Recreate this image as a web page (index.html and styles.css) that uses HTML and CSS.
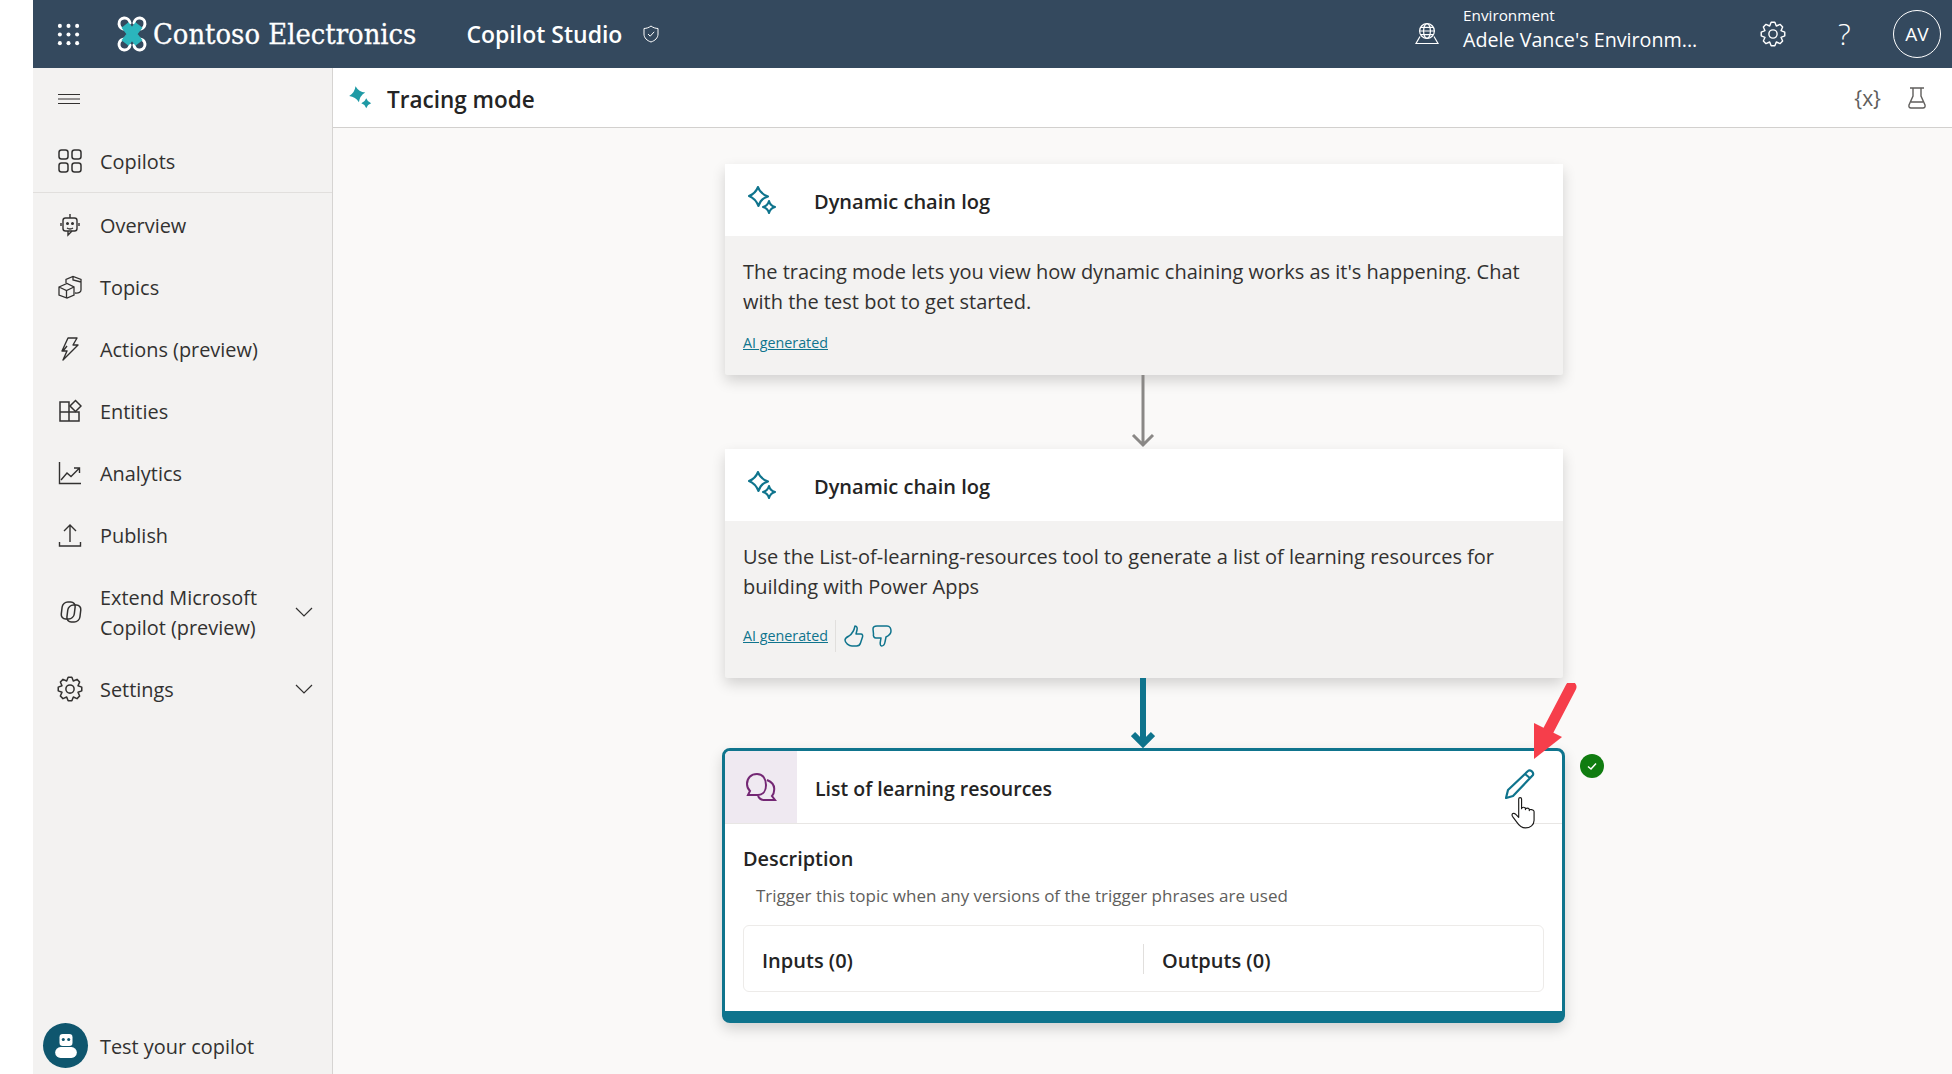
FILE: index.html

```html
<!DOCTYPE html>
<html lang="en">
<head>
    <meta charset="UTF-8">
    <title>Copilot Studio - Tracing mode</title>
    <link rel="stylesheet" href="styles.css">
</head>
<body>
<div class="app">
    <header class="topbar">
        <svg class="waffle" viewBox="0 0 24 24" fill="#fff">
            <circle cx="3" cy="3" r="2.1"/><circle cx="12" cy="3" r="2.1"/><circle cx="21" cy="3" r="2.1"/>
            <circle cx="3" cy="12" r="2.1"/><circle cx="12" cy="12" r="2.1"/><circle cx="21" cy="12" r="2.1"/>
            <circle cx="3" cy="21" r="2.1"/><circle cx="12" cy="21" r="2.1"/><circle cx="21" cy="21" r="2.1"/>
        </svg>
        <svg class="logo" viewBox="0 0 30 36">
            <path d="M8 13 A5.5 5.5 0 1 1 13 7 M22 13 A5.5 5.5 0 1 0 17 7 M8 23 A5.5 5.5 0 1 0 13 29 M22 23 A5.5 5.5 0 1 1 17 29" fill="none" stroke="#fff" stroke-width="3" stroke-linecap="round"/>
            <path d="M8 9 L22 27 M22 9 L8 27" fill="none" stroke="#2bb5bd" stroke-width="9"/>
        </svg>
        <span class="brand">Contoso Electronics</span>
        <span class="product">Copilot Studio</span>
        <svg class="shield" viewBox="0 0 18 18" fill="none" stroke="#fff" stroke-width="1">
            <path d="M9 1 C11 2.6 13.5 3.4 16 3.5 V9 C16 13 13 15.6 9 17 C5 15.6 2 13 2 9 V3.5 C4.5 3.4 7 2.6 9 1Z"/>
            <path d="M6 9 L8.2 11.2 L12.2 6.8"/>
        </svg>
        <div class="topbar-right">
            <svg class="globe" viewBox="0 0 24 22" fill="none" stroke="#fff" stroke-width="1.2">
                <circle cx="12" cy="8" r="7.4"/><ellipse cx="12" cy="8" rx="3.4" ry="7.4"/>
                <path d="M4.6 8 H19.4 M5.6 4.4 H18.4 M5.6 11.6 H18.4"/>
                <path d="M5 13.5 L1 20.5 H23 L19 13.5"/>
            </svg>
            <div class="env">
                <div class="env-label">Environment</div>
                <div class="env-name">Adele Vance's Environm...</div>
            </div>
            <svg class="gear-top" viewBox="0 0 24 24" fill="none" stroke="#fff" stroke-width="1.3" stroke-linejoin="round">
                <path d="M22.86 10.28 L22.86 13.72 L19.39 15.06 L20.9 18.47 L18.47 20.9 L15.06 19.39 L13.72 22.86 L10.28 22.86 L8.94 19.39 L5.53 20.9 L3.1 18.47 L4.61 15.06 L1.14 13.72 L1.14 10.28 L4.61 8.94 L3.1 5.53 L5.53 3.1 L8.94 4.61 L10.28 1.14 L13.72 1.14 L15.06 4.61 L18.47 3.1 L20.9 5.53 L19.39 8.94Z"/>
                <circle cx="12" cy="12" r="3.8"/>
            </svg>
            <span class="help">?</span>
            <div class="avatar">AV</div>
        </div>
    </header>

    <div class="workspace">
        <nav class="sidebar">
            <div class="nav-menu">
                <svg class="menu-icon" viewBox="0 0 22 10" stroke="#323130" stroke-width="1"><path d="M0 .5 H22 M0 5 H22 M0 9.5 H22"/></svg>
            </div>
            <a class="nav-row nav-first">
                <svg class="nav-icon" viewBox="0 0 24 24" fill="none" stroke="#323130" stroke-width="1.5">
                    <rect x="1" y="1" width="9" height="9" rx="2.5"/><rect x="14" y="1" width="9" height="9" rx="2.5"/>
                    <rect x="1" y="14" width="9" height="9" rx="2.5"/><rect x="14" y="14" width="9" height="9" rx="2.5"/>
                </svg>
                <span class="nav-label">Copilots</span>
            </a>
            <a class="nav-row">
                <svg class="nav-icon" viewBox="0 0 24 24" fill="none" stroke="#323130" stroke-width="1.4">
                    <path d="M12 1 V5"/><rect x="5" y="5" width="14" height="13" rx="2.5"/>
                    <path d="M3 10 V13 M21 10 V13 M9 15 Q12 17 15 15 M10 18 V22 L14 18"/>
                    <circle cx="9.5" cy="10.5" r=".8" fill="#323130"/><circle cx="14.5" cy="10.5" r=".8" fill="#323130"/>
                </svg>
                <span class="nav-label">Overview</span>
            </a>
            <a class="nav-row">
                <svg class="nav-icon" viewBox="0 0 24 24" fill="none" stroke="#323130" stroke-width="1.3">
                    <path d="M1 12 L9 8.5 L16 12 V20 L9 23 L1 20Z M1 12 L8.5 15.5 L16 12 M8.5 15.5 V23"/>
                    <path d="M8 8 V4.5 L15 1.5 L23 4.5 V15 C23 17 21 18.5 17 18 M15 1.5 V5 L23 7"/>
                </svg>
                <span class="nav-label">Topics</span>
            </a>
            <a class="nav-row">
                <svg class="nav-icon" viewBox="0 0 24 24" fill="none" stroke="#323130" stroke-width="1.4" stroke-linejoin="round">
                    <path d="M10 1 H19 L15 8 H20 L5 23 L9 14 H4 Z M5 14 L9 9"/>
                </svg>
                <span class="nav-label">Actions (preview)</span>
            </a>
            <a class="nav-row">
                <svg class="nav-icon" viewBox="0 0 24 24" fill="none" stroke="#323130" stroke-width="1.5">
                    <path d="M2 3 H11 V22 H2Z M2 13 H21 V22 H11"/>
                    <path d="M17.5 1.5 L23 7 L17.5 12.5 L12 7Z"/>
                </svg>
                <span class="nav-label">Entities</span>
            </a>
            <a class="nav-row">
                <svg class="nav-icon" viewBox="0 0 24 24" fill="none" stroke="#323130" stroke-width="1.4">
                    <path d="M1.5 1 V22.5 H23"/>
                    <path d="M3 19 L9 12 L13 15.5 L21 7.5 M16 7 H21.5 V12"/>
                </svg>
                <span class="nav-label">Analytics</span>
            </a>
            <a class="nav-row">
                <svg class="nav-icon" viewBox="0 0 24 24" fill="none" stroke="#323130" stroke-width="1.4">
                    <path d="M12 19 V2 M6 8 L12 2 L18 8 M1.5 19 V23 H22.5 V19"/>
                </svg>
                <span class="nav-label">Publish</span>
            </a>
            <a class="nav-row nav-tall">
                <svg class="nav-icon" viewBox="0 0 24 24" fill="none" stroke="#323130" stroke-width="1.5">
                    <rect x="3" y="2" width="13" height="17" rx="5" transform="skewX(-7) translate(2 0)"/>
                    <rect x="8" y="5" width="13" height="17" rx="5" transform="skewX(-7) translate(3 0)"/>
                </svg>
                <span class="nav-label">Extend Microsoft<br>Copilot (preview)</span>
                <svg class="chevron" viewBox="0 0 18 10" fill="none" stroke="#323130" stroke-width="1.2"><path d="M1 1 L9 9 L17 1"/></svg>
            </a>
            <a class="nav-row">
                <svg class="nav-icon nav-gear" viewBox="0 0 24 24" fill="none" stroke="#323130" stroke-width="1.4" stroke-linejoin="round">
                    <path d="M22.86 10.28 L22.86 13.72 L19.39 15.06 L20.9 18.47 L18.47 20.9 L15.06 19.39 L13.72 22.86 L10.28 22.86 L8.94 19.39 L5.53 20.9 L3.1 18.47 L4.61 15.06 L1.14 13.72 L1.14 10.28 L4.61 8.94 L3.1 5.53 L5.53 3.1 L8.94 4.61 L10.28 1.14 L13.72 1.14 L15.06 4.61 L18.47 3.1 L20.9 5.53 L19.39 8.94Z"/>
                    <circle cx="12" cy="12" r="3.8"/>
                </svg>
                <span class="nav-label">Settings</span>
                <svg class="chevron" viewBox="0 0 18 10" fill="none" stroke="#323130" stroke-width="1.2"><path d="M1 1 L9 9 L17 1"/></svg>
            </a>
            <a class="test-row">
                <span class="test-circle">
                    <svg viewBox="0 0 24 24" fill="#fff">
                        <rect x="6" y="1" width="12" height="11" rx="3"/>
                        <rect x="2" y="13" width="20" height="10" rx="5"/>
                        <circle cx="9.5" cy="6" r="1.4" fill="#0f566e"/><circle cx="14.5" cy="6" r="1.4" fill="#0f566e"/>
                    </svg>
                </span>
                <span class="nav-label">Test your copilot</span>
            </a>
        </nav>

        <main class="main">
            <div class="titlebar">
                <svg class="title-spark" viewBox="0 0 28 28" fill="#1f9aa5">
                    <path d="M10 0 Q12.5 7.5 20 10 Q12.5 12.5 10 20 Q7.5 12.5 0 10 Q7.5 7.5 10 0Z" transform="rotate(-12 10 10)"/>
                    <path d="M21 15 Q22.5 19.5 27 21 Q22.5 22.5 21 27 Q19.5 22.5 15 21 Q19.5 19.5 21 15Z"/>
                </svg>
                <h1>Tracing mode</h1>
                <span class="var-icon">{x}</span>
                <svg class="flask" viewBox="0 0 20 22" fill="none" stroke="#605e5c" stroke-width="1.4">
                    <path d="M3 1 H17 M6 1 V9 L2 18 C1.5 20 2.5 21 4 21 H16 C17.5 21 18.5 20 18 18 L14 9 V1 M4 15 H16"/>
                </svg>
            </div>

            <div class="canvas">
                <section class="card">
                    <div class="card-head">
                        <svg class="spark-outline" viewBox="0 0 28 28" fill="none" stroke="#0f748d" stroke-width="2.1" stroke-linejoin="round">
                            <path d="M10 1 Q12 7.5 20 10.5 Q12.5 12.5 10.5 20 Q7.5 12.5 1 10 Q7.5 7.5 10 1Z"/>
                            <path d="M21 15 Q22 19.5 27 21 Q22.5 22 21 27 Q20 22.5 15 21 Q19.5 20 21 15Z"/>
                        </svg>
                        <h2>Dynamic chain log</h2>
                    </div>
                    <div class="card-body">
                        <p>The tracing mode lets you view how dynamic chaining works as it's happening. Chat with the test bot to get started.</p>
                        <div class="ai-row"><a class="ai-link">AI generated</a></div>
                    </div>
                </section>

                <svg class="link-arrow" viewBox="0 0 24 74" fill="none" stroke="#8a8886" stroke-width="3">
                    <path d="M12 0 V70 M2 60 L12 70 L22 60"/>
                </svg>

                <section class="card">
                    <div class="card-head">
                        <svg class="spark-outline" viewBox="0 0 28 28" fill="none" stroke="#0f748d" stroke-width="2.1" stroke-linejoin="round">
                            <path d="M10 1 Q12 7.5 20 10.5 Q12.5 12.5 10.5 20 Q7.5 12.5 1 10 Q7.5 7.5 10 1Z"/>
                            <path d="M21 15 Q22 19.5 27 21 Q22.5 22 21 27 Q20 22.5 15 21 Q19.5 20 21 15Z"/>
                        </svg>
                        <h2>Dynamic chain log</h2>
                    </div>
                    <div class="card-body card-body-rated">
                        <p>Use the List-of-learning-resources tool to generate a list of learning resources for building with Power Apps</p>
                        <div class="ai-row">
                            <a class="ai-link">AI generated</a>
                            <span class="ai-sep"></span>
                            <svg class="thumb" viewBox="0 0 20 22" fill="none" stroke="#0f748d" stroke-width="1.5" stroke-linejoin="round">
                                <path d="M11 1 C13 1 13.5 3 13 5 L12 9 H17 C18.5 9 19 10.5 18.5 12 L16.5 18 C16 20 14.5 21 12.5 21 H8 C5 21 1 18 1 15 C1 13 3 12 5 11 C8 9 10 6 11 1Z"/>
                            </svg>
                            <svg class="thumb" viewBox="0 0 20 22" fill="none" stroke="#0f748d" stroke-width="1.5" stroke-linejoin="round">
                                <path d="M1 4 C1 2 3 1 5 1 H15 C18 1 19 4 19 6 C19 9 16 11 14 12 L13 17 C12.5 20 10.5 21 9.5 21 C8 21 8 18 8.5 16 L9 13 H4 C2 13 1 11 1.5 9Z"/>
                            </svg>
                        </div>
                    </div>
                </section>

                <svg class="link-arrow link-arrow-active" viewBox="0 0 24 70" fill="none" stroke="#0f748d" stroke-width="6">
                    <path d="M12 0 V66 M2 56 L12 66 L22 56"/>
                </svg>

                <section class="card-topic">
                    <div class="topic-head">
                        <div class="topic-icon">
                            <svg viewBox="0 0 32 30" fill="none" stroke="#742774" stroke-width="2">
                                <path d="M12 2 C18 2 21 7 21 13 C21 19 18 23 13 23 H3 L5 19 C3 17 2 15 2 12 C2 6 6 2 12 2Z"/>
                                <path d="M22 8 C27 10 30 14 29 19 C29 22 28 23 27 24 L30 28 H19 C16 28 14 26 13 24"/>
                            </svg>
                        </div>
                        <h2>List of learning resources</h2>
                        <svg class="pencil" viewBox="0 0 30 30" fill="none" stroke="#0f748d" stroke-width="2.2" stroke-linejoin="round">
                            <path d="M23 2 C25 0 29 3 28 6 L8 27 L1 29 L3 21Z M20 5 L25.5 9.5"/>
                        </svg>
                    </div>
                    <div class="topic-body">
                        <h3>Description</h3>
                        <p class="topic-desc">Trigger this topic when any versions of the trigger phrases are used</p>
                        <div class="io-box">
                            <div class="io-cell io-inputs"><span class="io-label">Inputs (0)</span></div>
                            <div class="io-cell io-outputs"><span class="io-label">Outputs (0)</span></div>
                        </div>
                    </div>
                    <!-- annotation drawn on top of the screenshot -->
                    <svg class="hand" viewBox="0 0 26 34" fill="#fff" stroke="#1b1a19" stroke-width="1.2" stroke-linejoin="round">
                        <path d="M8 3 C8 1 11 1 11 3 V13 C11 11 15 11 15 13 V14 C15 12 19 12 19 14 V15 C19 13 24 14 24 16 V25 C24 30 20 33 15 33 C10 33 8 30 6 27 L1.5 21 C0 18 3 17 5 19 L8 22Z"/>
                    </svg>
                    <svg class="red-arrow" viewBox="0 0 50 80">
                        <path d="M42 4 L18 50" stroke="#f63e4b" stroke-width="11" stroke-linecap="round" fill="none"/>
                        <path d="M5 40 L33 54 L5 76Z" fill="#f63e4b"/>
                    </svg>
                    <span class="ok-badge">
                        <svg viewBox="0 0 12 12" fill="none" stroke="#fff" stroke-width="1.5"><path d="M2 6.5 L5 9 L10 3.5"/></svg>
                    </span>
                </section>
            </div>
        </main>
    </div>
</div>
</body>
</html>
```

FILE: styles.css

```css
html, body {
    margin: 0;
    height: 100%;
    overflow: hidden;
    background: #fff;
}
body {
    font-family: "Open Sans", "Noto Sans", sans-serif;
    color: #323130;
}
h1, h2, h3, p {
    margin: 0;
}
.app {
    margin-left: 33px;
    height: 1074px;
    display: flex;
    flex-direction: column;
}

/* top bar */
.topbar {
    height: 68px;
    flex: none;
    background: #34495e;
    color: #fff;
    display: flex;
    align-items: center;
}
.waffle {
    width: 23px;
    height: 23px;
    margin-left: 24px;
}
.logo {
    width: 30px;
    height: 36px;
    margin-left: 37px;
}
.brand {
    font-family: "DejaVu Serif Condensed", "DejaVu Serif", serif;
    font-size: 28.8px;
    -webkit-text-stroke: 0.3px #fff;
    margin-left: 6px;
    white-space: nowrap;
}
.product {
    font-size: 23px;
    font-weight: 600;
    margin-left: 50px;
    white-space: nowrap;
}
.shield {
    width: 18px;
    height: 18px;
    margin-left: 20px;
}
.topbar-right {
    margin-left: auto;
    display: flex;
    align-items: center;
}
.globe {
    width: 24px;
    height: 22px;
}
.env {
    margin-left: 24px;
    width: 297px;
    margin-top: -9px;
}
.env-label {
    font-size: 15.3px;
    line-height: 20px;
}
.env-name {
    font-size: 19.7px;
    line-height: 29px;
    white-space: nowrap;
}
.gear-top {
    width: 26px;
    height: 26px;
    margin-right: 52px;
}
.help {
    font-size: 30px;
    font-weight: 300;
    width: 16px;
    margin-right: 39px;
    line-height: 30px;
}
.avatar {
    width: 46px;
    height: 46px;
    border: 1px solid #fff;
    border-radius: 50%;
    margin-right: 11px;
    display: flex;
    align-items: center;
    justify-content: center;
    font-size: 19px;
}

.workspace {
    flex: 1;
    display: flex;
    min-height: 0;
}

/* left nav */
.sidebar {
    width: 299px;
    flex: none;
    background: #f3f2f1;
    border-right: 1px solid #d6d4d2;
    display: flex;
    flex-direction: column;
    font-size: 19.9px;
}
.nav-menu {
    height: 62px;
    display: flex;
    align-items: center;
    padding-left: 25px;
}
.menu-icon {
    width: 22px;
    height: 10px;
}
.nav-row {
    height: 62px;
    display: flex;
    align-items: center;
    padding-left: 25px;
    flex: none;
    line-height: 30px;
}
.nav-label {
    padding-top: 1px;
    white-space: nowrap;
}
.nav-first {
    border-bottom: 1px solid #e1dfdd;
    margin-bottom: 1px;
}
.nav-tall {
    height: 92px;
}
.nav-icon {
    width: 24px;
    height: 24px;
    flex: none;
    margin-right: 18px;
}
.nav-gear {
    width: 26px;
    height: 26px;
    margin-left: -1px;
    margin-right: 17px;
}
.chevron {
    width: 18px;
    height: 10px;
    margin-left: auto;
    margin-right: 19px;
}
.test-row {
    margin-top: auto;
    height: 45px;
    margin-bottom: 6px;
    display: flex;
    align-items: center;
    padding-left: 10px;
}
.test-circle {
    width: 45px;
    height: 45px;
    border-radius: 50%;
    background: #0f566e;
    margin-right: 12px;
    display: flex;
    align-items: center;
    justify-content: center;
}
.test-circle svg {
    width: 26px;
    height: 26px;
}

/* title */
.main {
    flex: 1;
    display: flex;
    flex-direction: column;
    min-width: 0;
}
.titlebar {
    height: 59px;
    flex: none;
    background: #fff;
    border-bottom: 1px solid #d2d0ce;
    display: flex;
    align-items: center;
    padding-left: 16px;
}
.title-spark {
    width: 23px;
    height: 23px;
}
.titlebar h1 {
    font-size: 22.5px;
    font-weight: 600;
    margin-left: 15px;
    padding-top: 4px;
    color: #242424;
}
.var-icon {
    margin-left: auto;
    font-size: 21px;
    color: #605e5c;
}
.flask {
    width: 20px;
    height: 22px;
    margin-left: 26px;
    margin-right: 25px;
}

/* canvas */
.canvas {
    flex: 1;
    background: #faf9f8;
    padding: 36px 0 0 392px;
    display: flex;
    flex-direction: column;
    align-items: flex-start;
    min-height: 0;
}
.card {
    width: 838px;
    background: #f3f2f1;
    box-shadow: 0 6px 14px rgba(0, 0, 0, 0.16);
    border-radius: 2px;
}
.card-head {
    height: 72px;
    background: #fff;
    display: flex;
    align-items: center;
    padding-left: 23px;
}
.spark-outline {
    width: 28px;
    height: 28px;
    flex: none;
}
.card-head h2 {
    font-size: 20px;
    font-weight: 600;
    margin-left: 38px;
    padding-top: 2px;
    color: #242424;
}
.card-body {
    padding: 21px 18px 22px;
    font-size: 20px;
    line-height: 30px;
}
.card-body-rated {
    padding-bottom: 26px;
}
.ai-row {
    margin-top: 16px;
    display: flex;
    align-items: center;
    height: 20px;
}
.card-body-rated .ai-row {
    margin-top: 18px;
    height: 32px;
}
.ai-link {
    font-size: 14.3px;
    line-height: 20px;
    color: #0f748d;
    text-decoration: underline;
}
.ai-sep {
    width: 1px;
    height: 32px;
    background: #e1dfdd;
    margin: 0 8px 0 7px;
}
.thumb {
    width: 20px;
    height: 22px;
    margin-right: 8px;
}
.link-arrow {
    width: 24px;
    height: 74px;
    margin-left: 406px;
    flex: none;
    display: block;
}
.link-arrow-active {
    height: 70px;
}

/* topic node */
.card-topic {
    position: relative;
    width: 843px;
    box-sizing: border-box;
    margin-left: -3px;
    background: #fff;
    border: 3px solid #0f748d;
    border-bottom-width: 12px;
    border-radius: 8px;
    box-shadow: 0 6px 14px rgba(0, 0, 0, 0.16);
}
.topic-head {
    height: 72px;
    display: flex;
    align-items: center;
    border-bottom: 1px solid #e8e6e4;
}
.topic-icon {
    width: 72px;
    height: 100%;
    background: #efe9f1;
    display: flex;
    align-items: center;
    justify-content: center;
    border-top-left-radius: 5px;
}
.topic-icon svg {
    width: 32px;
    height: 30px;
}
.topic-head h2 {
    font-size: 19.5px;
    font-weight: 600;
    margin-left: 18px;
    padding-top: 2px;
    color: #242424;
}
.pencil {
    width: 30px;
    height: 30px;
    margin-left: auto;
    margin-right: 27px;
    margin-top: -6px;
}
.topic-body {
    padding: 22px 18px 19px 18px;
}
.topic-body h3 {
    font-size: 19.9px;
    font-weight: 600;
    line-height: 26px;
    color: #242424;
}
.topic-desc {
    font-size: 17px;
    line-height: 22px;
    margin-top: 13px;
    padding-left: 13px;
    color: #605e5c;
}
.io-box {
    margin-top: 18px;
    height: 67px;
    box-sizing: border-box;
    border: 1px solid #edebe9;
    border-radius: 6px;
    display: flex;
    align-items: center;
}
.io-cell {
    font-size: 20px;
    font-weight: 600;
    line-height: 30px;
    color: #242424;
}
.io-label {
    display: block;
    transform: translateY(2px);
}
.io-inputs {
    width: 400px;
    box-sizing: border-box;
    padding-left: 18px;
    border-right: 1px solid #e1dfdd;
}
.io-outputs {
    padding-left: 18px;
}
.hand {
    position: absolute;
    left: 786px;
    top: 45px;
    width: 25px;
    height: 33px;
}
.red-arrow {
    position: absolute;
    left: 804px;
    top: -68px;
    width: 50px;
    height: 80px;
}
.ok-badge {
    position: absolute;
    left: 855px;
    top: 3px;
    width: 24px;
    height: 24px;
    border-radius: 50%;
    background: #107c10;
    display: flex;
    align-items: center;
    justify-content: center;
}
.ok-badge svg {
    width: 12px;
    height: 12px;
}
```
